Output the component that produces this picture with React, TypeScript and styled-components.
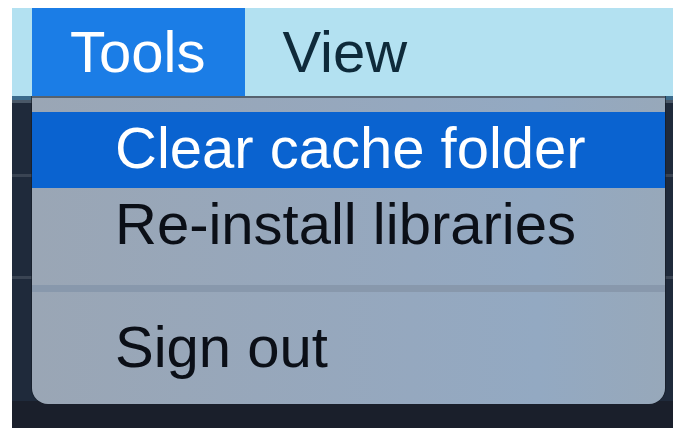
import React from 'react'
import styled, { createGlobalStyle } from 'styled-components'

const GlobalStyle = createGlobalStyle`
  html, body {
    margin: 0;
    padding: 0;
    background: #ffffff;
  }
  * {
    box-sizing: border-box;
  }
`

const Page = styled.div`
  width: 673px;
  height: 428px;
  padding: 8px 0 0 12px;
  overflow: hidden;
  font-family: 'Liberation Sans', Arial, sans-serif;
`

const Window = styled.div`
  height: 420px;
  display: flex;
  flex-direction: column;
  background: #1f2a3b;
`

const MenuBar = styled.div`
  height: 88px;
  flex: none;
  display: flex;
  padding-left: 20px;
  background: #b3e1f1;
`

const MenuTitle = styled.div<{ active?: boolean }>`
  height: 88px;
  line-height: 88px;
  padding: 0 ${(p) => (p.active ? '40px 0 38px' : '37px 0 37px')};
  font-size: 58px;
  color: ${(p) => (p.active ? '#ffffff' : '#0e2a3a')};
  background: ${(p) => (p.active ? '#1b7de6' : 'transparent')};
`

const Workspace = styled.div`
  position: relative;
  flex: 1;
  display: flex;
  flex-direction: column;
`

const TopBand = styled.div`
  height: 7px;
  flex: none;
  background: #3b6b8c;
  border-bottom: 3px solid #4a5868;
`

const ListRow = styled.div<{ h: number; dark?: boolean; last?: boolean }>`
  height: ${(p) => p.h}px;
  flex: none;
  background: ${(p) => (p.dark ? '#1a1f2b' : '#1f2a3b')};
  border-bottom: ${(p) => (p.dark || p.last ? 'none' : '3px solid #3a4453')};
`

const Dropdown = styled.div`
  position: absolute;
  left: 20px;
  top: 0;
  width: 633px;
  height: 308px;
  padding: 14px 0 17px;
  border-top: 2px solid #56626f;
  border-radius: 0 0 16px 16px;
  background: linear-gradient(90deg, #9aa6b5 0%, #95a8bf 60%, #93a9c2 80%, #97a8ba 100%);
  box-shadow: -1px 0 0 rgba(20, 26, 36, 0.6), 1px 0 0 rgba(20, 26, 36, 0.6);
`

const MenuItem = styled.div<{ selected?: boolean }>`
  height: 76px;
  line-height: 72px;
  padding-left: 83px;
  font-size: 58px;
  white-space: nowrap;
  color: ${(p) => (p.selected ? '#ffffff' : '#0b0f17')};
  background: ${(p) => (p.selected ? '#0a63d0' : 'transparent')};
`

const Separator = styled.div`
  height: 7px;
  margin: 21px 0 19px;
  background: #8898ac;
`

export default function App() {
  return (
    <>
      <GlobalStyle />
      <Page>
        <Window>
          <MenuBar>
            <MenuTitle active>Tools</MenuTitle>
            <MenuTitle>View</MenuTitle>
          </MenuBar>
          <Workspace>
            <TopBand />
            <ListRow h={74} />
            <ListRow h={102} />
            <ListRow h={122} last />
            <ListRow h={30} dark />
            <Dropdown>
              <MenuItem selected>Clear cache folder</MenuItem>
              <MenuItem>Re-install libraries</MenuItem>
              <Separator />
              <MenuItem>Sign out</MenuItem>
            </Dropdown>
          </Workspace>
        </Window>
      </Page>
    </>
  )
}
